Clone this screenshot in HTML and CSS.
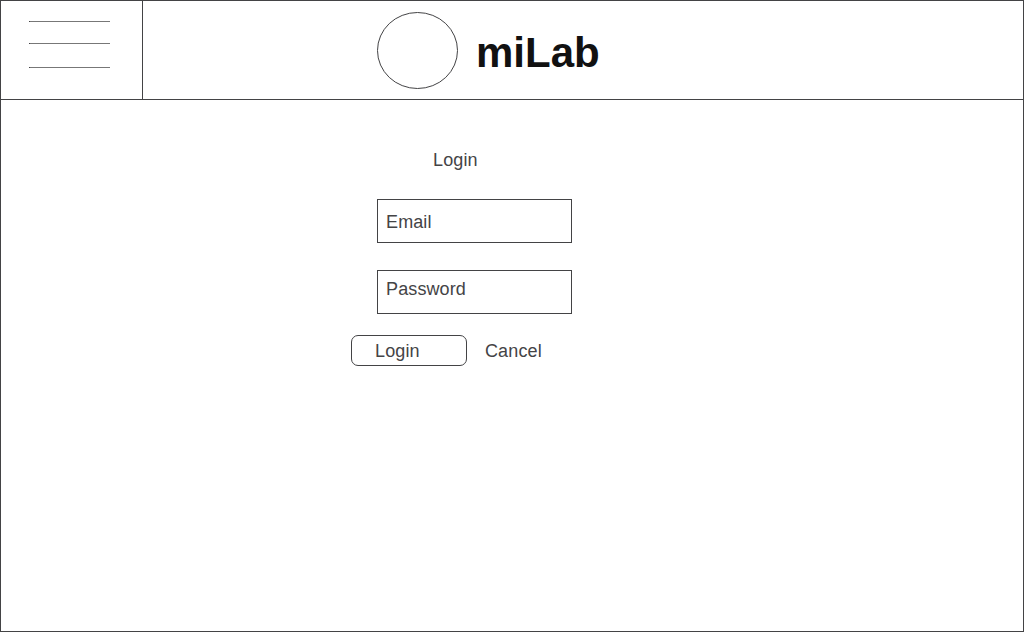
FILE: index.html
```html
<!DOCTYPE html>
<html lang="en">
<head>
<meta charset="utf-8">
<title>miLab</title>
<link rel="stylesheet" href="styles.css">
</head>
<body>
<div class="page">
  <header class="header">
    <div class="menu">
      <span class="line"></span>
      <span class="line"></span>
      <span class="line"></span>
    </div>
    <div class="brand">
      <svg class="logo" width="81" height="77" viewBox="0 0 81 77"><ellipse cx="40.5" cy="38.5" rx="40" ry="38"/></svg>
      <h1 class="name">miLab</h1>
    </div>
  </header>
  <main class="login">
    <h2 class="title">Login</h2>
    <div class="field email">Email</div>
    <div class="field password">Password</div>
    <div class="actions">
      <div class="submit">Login</div>
      <div class="cancel">Cancel</div>
    </div>
  </main>
</div>
</body>
</html>
```

FILE: styles.css
```css
* { box-sizing: border-box; }
body {
  margin: 0;
  background: #fff;
  color: #444446;
  font: 18px/20px "Liberation Sans", Arial, sans-serif;
  letter-spacing: 0.12px;
}
.page { height: 632px; border: 1px solid #434345; }
.header { display: flex; height: 99px; border-bottom: 1px solid #434345; }
.menu {
  display: flex;
  flex-direction: column;
  width: 142px;
  padding: 20px 0 0 28px;
  border-right: 1px solid #434345;
}
.line { width: 81px; height: 1px; background: #777; border-left: 1px solid #434345; }
.line:nth-child(2) { margin-top: 21px; }
.line:nth-child(3) { margin-top: 23px; }
.brand { display: flex; padding: 11px 0 0 234px; }
.logo { display: block; fill: none; stroke: #434345; }
.name {
  margin: 17px 0 0 18px;
  color: #111;
  font-size: 42px;
  line-height: 48px;
  letter-spacing: 0;
}
.login { display: flex; flex-direction: column; padding: 50px 0 0 350px; }
.title { margin: 0 0 0 82px; font-size: 18px; font-weight: 400; }
.field {
  width: 195px;
  height: 44px;
  margin-left: 26px;
  padding-left: 8px;
  border: 1px solid #434345;
}
.email { margin-top: 29px; padding-top: 12px; }
.password { margin-top: 27px; padding-top: 8px; }
.actions { display: flex; margin-top: 21px; }
.submit {
  width: 116px;
  height: 31px;
  padding: 5px 0 0 23px;
  border: 1px solid #434345;
  border-radius: 7px;
}
.cancel { margin: 6px 0 0 18px; }
```
